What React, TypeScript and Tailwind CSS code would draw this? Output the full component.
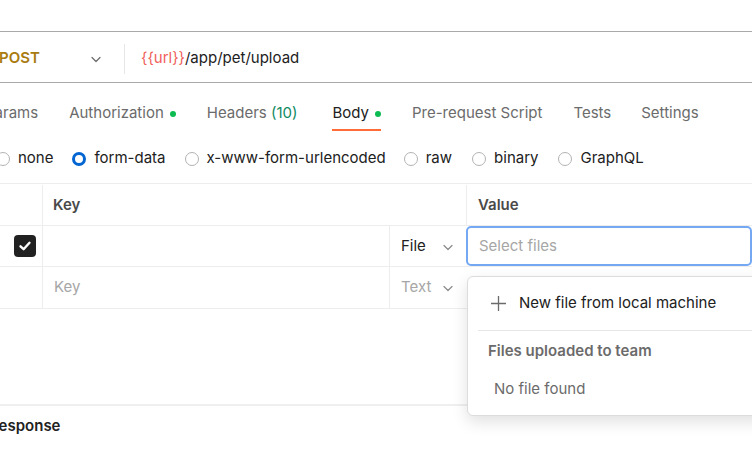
import React from "react";

const Chevron = ({ className = "" }: { className?: string }) => (
  <svg width="12" height="12" viewBox="0 0 12 12" className={className} fill="none">
    <path d="M2 4.5 L6 8.5 L10 4.5" stroke="currentColor" strokeWidth="1.2" strokeLinecap="round" strokeLinejoin="round" />
  </svg>
);

const Radio = ({ checked = false }: { checked?: boolean }) =>
  checked ? (
    <span className="inline-block w-[14px] h-[14px] rounded-full border-[3px] border-[#0265d2] bg-white" />
  ) : (
    <span className="inline-block w-[14px] h-[14px] rounded-full border border-[#b3b3b3] bg-white" />
  );

export default function App() {
  return (
    <div
      className="relative w-[752px] h-[449px] overflow-hidden bg-white text-[15px] text-[#212121]"
      style={{ fontFamily: "Inter, 'Noto Sans', sans-serif" }}
    >
      {/* top strip */}
      <div className="h-[32px] border-b border-[#a9a9a9]" />

      {/* request bar */}
      <div className="h-[51px] flex items-center border-b border-[#a9a9a9] pt-[3px]">
        <div className="w-[124px] flex items-center justify-between pr-[22px]">
          <span className="font-semibold text-[#a97b0f] -ml-[1px]">POST</span>
          <Chevron className="text-[#6b6b6b]" />
        </div>
        <div className="w-px h-[30px] bg-[#e6e6e6]" />
        <div className="pl-[16px]">
          <span className="text-[#f0605a]">{"{{url}}"}</span>
          <span>/app/pet/upload</span>
        </div>
      </div>

      {/* tabs */}
      <div className="h-[48px] flex items-stretch text-[#6b6b6b] -ml-[15px]">
        <div className="flex items-center pt-[13px] mr-[31px]">Params</div>
        <div className="flex items-center pt-[13px] mr-[31px] gap-[6px]">
          Authorization <span className="w-[6px] h-[6px] rounded-full bg-[#0cbb52]" />
        </div>
        <div className="flex items-center pt-[13px] mr-[35px]">
          Headers&nbsp;<span className="text-[#0f8a5f]">(10)</span>
        </div>
        <div className="flex items-center pt-[13px] mr-[31px] gap-[6px] relative text-[#212121]">
          Body <span className="w-[6px] h-[6px] rounded-full bg-[#0cbb52]" />
          <span className="absolute left-0 right-0 bottom-[0px] h-[2px] bg-[#ff6c37]" />
        </div>
        <div className="flex items-center pt-[13px] mr-[31px]">Pre-request Script</div>
        <div className="flex items-center pt-[13px] mr-[30px]">Tests</div>
        <div className="flex items-center pt-[13px]">Settings</div>
      </div>

      {/* radio row */}
      <div className="h-[52px] flex items-center -ml-[4px] pt-[3px]">
        <label className="flex items-center gap-[8px] mr-[19px]"><Radio /> none</label>
        <label className="flex items-center gap-[8px] mr-[19px]"><Radio checked /> form-data</label>
        <label className="flex items-center gap-[8px] mr-[18px]"><Radio /> x-www-form-urlencoded</label>
        <label className="flex items-center gap-[8px] mr-[20px]"><Radio /> raw</label>
        <label className="flex items-center gap-[8px] mr-[20px]"><Radio /> binary</label>
        <label className="flex items-center gap-[8px]"><Radio /> GraphQL</label>
      </div>

      {/* table */}
      <div className="border-t border-b border-[#ededed]">
        <div className="h-[42px] flex border-b border-[#ededed] pt-[1px]">
          <div className="w-[43px] border-r border-[#ededed]" />
          <div className="w-[424px] flex items-center pl-[10px] font-semibold text-[#4a4a4a] border-r border-[#ededed]">Key</div>
          <div className="flex-1 flex items-center pl-[11px] font-semibold text-[#4a4a4a]">Value</div>
        </div>
        <div className="h-[41px] flex border-b border-[#ededed]">
          <div className="w-[43px] border-r border-[#ededed] flex items-center justify-end pr-[6px]">
            <span className="w-[22px] h-[22px] rounded-[4px] bg-[#212121] flex items-center justify-center">
              <svg width="14" height="14" viewBox="0 0 14 14" fill="none">
                <path d="M2.5 7.3 L5.6 10.2 L11.5 3.8" stroke="white" strokeWidth="2.4" strokeLinecap="round" strokeLinejoin="round" />
              </svg>
            </span>
          </div>
          <div className="w-[347px] border-r border-[#ededed]" />
          <div className="w-[77px] flex items-center pl-[11px] pr-[13px] pt-[1px] justify-between">
            <span>File</span>
            <Chevron className="text-[#8a8a8a]" />
          </div>
          <div className="flex-1 flex items-center pl-[11px] pt-[1px] border-2 border-[#74a8f2] rounded-[5px] -ml-[1px] text-[#a6a6a6] w-[300px]">
            Select files
          </div>
        </div>
        <div className="h-[41px] flex">
          <div className="w-[43px] border-r border-[#ededed]" />
          <div className="w-[347px] border-r border-[#ededed] flex items-center pl-[11px] text-[#a6a6a6]">Key</div>
          <div className="w-[77px] flex items-center pl-[11px] pr-[13px] justify-between text-[#a6a6a6]">
            <span>Text</span>
            <Chevron className="text-[#8a8a8a]" />
          </div>
          <div className="flex-1" />
        </div>
      </div>

      {/* spacer */}
      <div className="h-[97px] border-b-2 border-[#efefef]" />

      {/* response */}
      <div className="h-[38px] flex items-center -ml-[11px] pt-[3px] font-semibold text-[#212121]">Response</div>

      {/* dropdown */}
      <div className="absolute left-[467px] top-[276px] w-[320px] h-[140px] bg-white border border-[#dcdcdc] rounded-[6px] shadow-[0_6px_16px_rgba(0,0,0,0.12)]">
        <div className="h-[53px] flex items-center pl-[22px] gap-[12px] text-[#212121]">
          <svg width="17" height="17" viewBox="0 0 17 17" fill="none">
            <path d="M8.5 1 V16 M1 8.5 H16" stroke="#6b6b6b" strokeWidth="1.3" />
          </svg>
          New file from local machine
        </div>
        <div className="ml-[10px] h-px bg-[#e6e6e6]" />
        <div className="h-[40px] flex items-center pl-[20px] font-semibold text-[#6b6b6b]">Files uploaded to team</div>
        <div className="h-[36px] flex items-center pl-[26px] text-[#6b6b6b]">No file found</div>
      </div>
    </div>
  );
}
